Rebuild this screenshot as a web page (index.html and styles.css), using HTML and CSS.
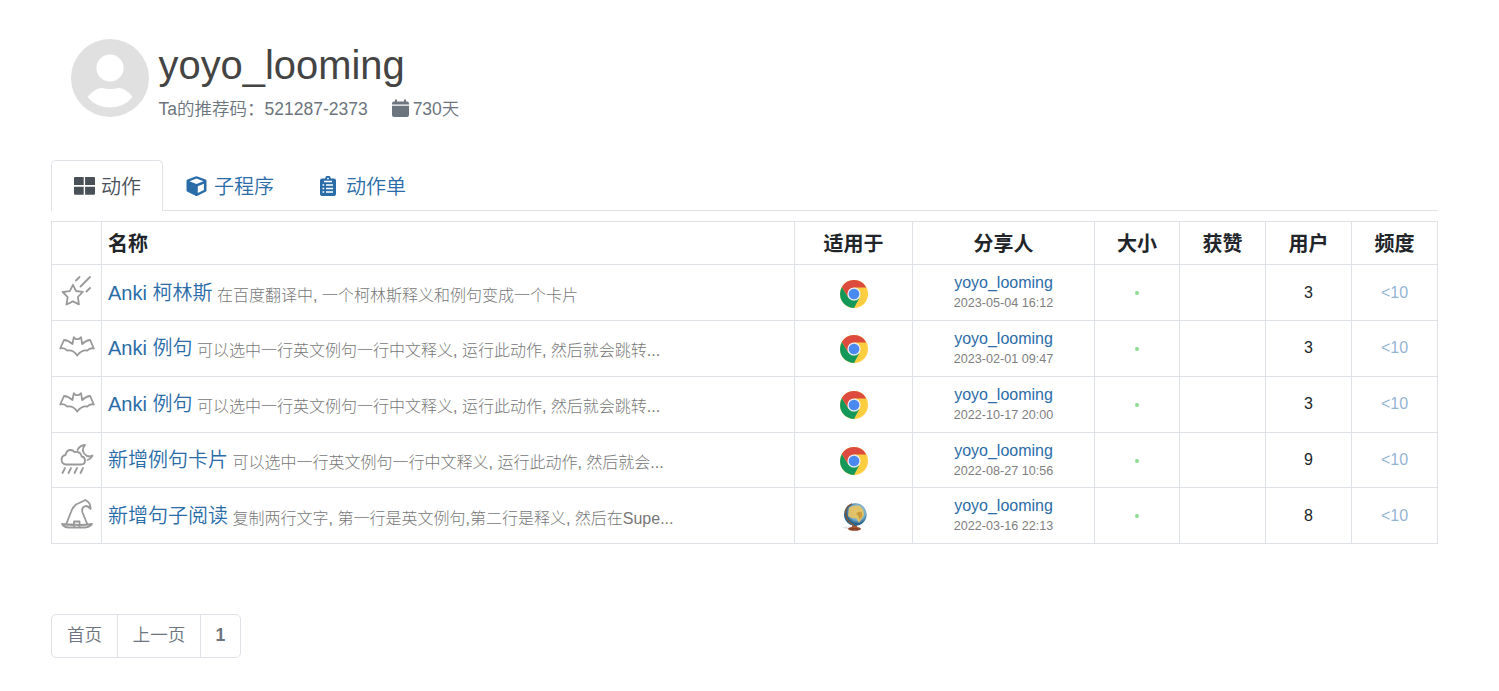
FILE: index.html
```html
<!DOCTYPE html>
<html lang="zh-CN">
<head>
<meta charset="utf-8">
<title>yoyo_looming</title>
<link rel="stylesheet" href="styles.css">
</head>
<body>
<svg class="defs" width="0" height="0">
  <symbol id="chrome" viewBox="0 0 28 28">
    <circle cx="14" cy="14" r="14" fill="#ffcd40"/>
    <path d="M1.900 7 8.200 17.200 14 20.600l5.400-2.600L14 28A14 14 0 0 1 1.900 7Z" fill="#13985a"/>
    <path d="M1.900 7A14 14 0 0 1 26.300 7.400H14L8 16.800Z" fill="#dc4b3e"/>
    <circle cx="14" cy="14" r="6.600" fill="#e9edf3"/>
    <circle cx="14" cy="14" r="5.300" fill="#4a89ef"/>
  </symbol>
  <symbol id="bat" viewBox="0 0 36 22">
    <path d="M1.200 12.500 5 4q4.200.2 8.500 4L14.800 1.200l2 2h3L22 1.200l1.200 6.800q4-3.800 8-4l3.600 8.500q-4-1-6.300 2-6-1-10.300 5-3.600-6-10.100-5-2.700-3.200-6.900-2Z"/>
  </symbol>
</svg>
<main class="page">
  <header class="profile">
    <svg class="avatar" viewBox="0 0 78 78"><circle cx="39" cy="39" r="39" fill="#e0e0e0"/><circle cx="39" cy="29" r="13.600" fill="#fff"/><path d="M16.500 58Q24 49 31 49q8 2 16 0 8 0 14.500 9Q53 68.500 39 68.500T16.500 58Z" fill="#fff"/></svg>
    <div>
      <h1 class="name">yoyo_looming</h1>
      <div class="meta"><span>Ta的推荐码：521287-2373</span><span class="days"><svg width="17" height="18" viewBox="0 0 17 18" fill="currentColor"><path d="M0 4.500Q0 2.500 2 2.500H3V.5h2v2h7v-2h2v2h1q2 0 2 2v1H0ZM0 6.700h17V16q0 2-2 2H2q-2 0-2-2Z"/></svg>730天</span></div>
    </div>
  </header>
  <nav class="tabs">
    <a class="tab active"><svg width="21" height="18" viewBox="0 0 21 18" fill="currentColor"><path d="M1 0h8.700v8H0V1Q0 0 1 0ZM11.100 0H20q1 0 1 1v7h-9.900ZM0 9.700h9.700v8H1q-1 0-1-1ZM11.100 9.700H21v7q0 1-1 1h-8.900Z"/></svg><span>动作</span></a>
    <a class="tab cube"><svg width="21" height="20" viewBox="0 0 21 20"><path fill="currentColor" d="M9.500.400q1-.5 2 0l8 3q1 .4 1 1.600v9.200q0 1-1 1.600l-8 3.900q-1 .4-2 0l-8-3.900q-1-.6-1-1.600V5q0-1.200 1-1.600Z"/><path fill="#fff" d="M3.500 5.200 10.500 2.600l7 2.600-7 2.900ZM11.800 10.300l6.100-2.600v6.200l-6.100 3Z"/></svg><span>子程序</span></a>
    <a class="tab list"><svg width="16" height="20" viewBox="0 0 16 20"><path fill="currentColor" d="M2 2.500h3.200a2.800 2.800 0 0 1 5.600 0H14q2 0 2 2V18q0 2-2 2H2q-2 0-2-2V4.500q0-2 2-2Z"/><circle cx="8" cy="2.600" r=".9" fill="#fff"/><path stroke="#fff" stroke-width="1.300" d="M4 5.500h8M2.500 9h1.700M6 9h7M2.500 12.500h1.700M6 12.500h7M2.500 16h1.700M6 16h7"/></svg><span>动作单</span></a>
  </nav>
  <table class="actions">
    <colgroup><col class="c-icon"><col class="c-name"><col class="c-app"><col class="c-user"><col class="c-size"><col class="c-stat"><col class="c-stat"><col class="c-stat"></colgroup>
    <thead><tr><th></th><th class="left">名称</th><th>适用于</th><th>分享人</th><th>大小</th><th>获赞</th><th>用户</th><th>频度</th></tr></thead>
    <tbody>
      <tr><td><svg class="glyph" viewBox="0 0 36 32"><path d="m14 8.800 3 6.200 6.800.9-4.900 5.100 1 7.400L14 25.400l-6.500 3.100 1.200-7.400-5-5.100 7.100-.9ZM17 4.500l3.500-3.500M21.500 10.500l9.500-9.500M27.500 15.500l3.500-3.500"/></svg></td><td class="left"><a class="title">Anki 柯林斯</a> <span class="desc">在百度翻译中, 一个柯林斯释义和例句变成一个卡片</span></td><td><svg class="app"><use href="#chrome"/></svg></td><td><a class="author">yoyo_looming</a><time>2023-05-04 16:12</time></td><td><i class="dot"></i></td><td></td><td class="num">3</td><td class="freq">&lt;10</td></tr>
      <tr class="raised"><td><svg class="glyph bat"><use href="#bat"/></svg></td><td class="left"><a class="title">Anki 例句</a> <span class="desc">可以选中一行英文例句一行中文释义, 运行此动作, 然后就会跳转...</span></td><td><svg class="app"><use href="#chrome"/></svg></td><td><a class="author">yoyo_looming</a><time>2023-02-01 09:47</time></td><td><i class="dot"></i></td><td></td><td class="num">3</td><td class="freq">&lt;10</td></tr>
      <tr class="raised"><td><svg class="glyph bat"><use href="#bat"/></svg></td><td class="left"><a class="title">Anki 例句</a> <span class="desc">可以选中一行英文例句一行中文释义, 运行此动作, 然后就会跳转...</span></td><td><svg class="app"><use href="#chrome"/></svg></td><td><a class="author">yoyo_looming</a><time>2022-10-17 20:00</time></td><td><i class="dot"></i></td><td></td><td class="num">3</td><td class="freq">&lt;10</td></tr>
      <tr class="short raised"><td><svg class="glyph" viewBox="0 0 36 32"><path d="M7 20.500a4.800 4.800 0 0 1-.5-9.500Q7.500 6 11.500 6q2.500 0 4 2 6-1 7.200 4.500 3.300.6 3.300 4 0 4-4 4ZM18.500 6Q20.500 1.500 26 1q-4 5-.5 9t8 1.500q-1.500 3.500-5 4.500M6 24l-2.500 5M12 24l-2.500 5M18 24l-2.500 5M24 24l-2.500 5"/></svg></td><td class="left"><a class="title">新增例句卡片</a> <span class="desc">可以选中一行英文例句一行中文释义, 运行此动作, 然后就会...</span></td><td><svg class="app"><use href="#chrome"/></svg></td><td><a class="author">yoyo_looming</a><time>2022-08-27 10:56</time></td><td><i class="dot"></i></td><td></td><td class="num">9</td><td class="freq">&lt;10</td></tr>
      <tr><td><svg class="glyph" viewBox="0 0 36 32"><path d="M7.500 24.500 12 13q1.500-4.500 5-7.500L26.500 1q5.500 3 5 9-2-3-5-3-4.500 1.500-3 6.500l4.500 11M3 25q5 1 12 1M20.500 26q7 0 12.500-1-2 3-7 3.500H10Q5 28.500 3 25ZM15 22.500h5.500v6H15Z"/></svg></td><td class="left"><a class="title">新增句子阅读</a> <span class="desc">复制两行文字, 第一行是英文例句,第二行是释义, 然后在Supe...</span></td><td><svg class="app" viewBox="0 0 28 28"><defs><radialGradient id="sea" cx=".6" cy=".4"><stop offset="0" stop-color="#d9cf8f"/><stop offset=".7" stop-color="#77aecb"/><stop offset="1" stop-color="#28648f"/></radialGradient></defs><path d="M2 24.500q8-2 16 0-8 3-16 0" fill="#e3e3e3"/><ellipse cx="14.500" cy="25.800" rx="6.500" ry="2" fill="#8d4426"/><path d="M12.500 21.500h4l1 3.500h-6Z" fill="#a65a31"/><circle cx="15.300" cy="11.500" r="11.300" fill="url(#sea)"/><path d="M9 4.500q7-3 11-1.500l3 4 1 5-5 8q-2-4-3-5-5 1-8-2Z" fill="#e8c362" opacity=".9"/><path d="M19 8.500l3 1v4l-2.500 3-1.500-4-2-2Z" fill="#c99d3f"/><path d="M12 .8Q4 4 6 12.500q1.500 7 8 9.500" fill="none" stroke="#80583c" stroke-width="1.300"/></svg></td><td><a class="author">yoyo_looming</a><time>2022-03-16 22:13</time></td><td><i class="dot"></i></td><td></td><td class="num">8</td><td class="freq">&lt;10</td></tr>
    </tbody>
  </table>
  <nav class="pager"><a class="first">首页</a><a class="prev">上一页</a><a class="current">1</a></nav>
</main>
</body>
</html>
```
FILE: styles.css
```css
* { box-sizing: border-box; }
body { margin: 0; background: #fff; color: #212529; font: 350 20px/30px "Liberation Sans", "Noto Sans CJK SC DemiLight", "Noto Sans CJK SC", sans-serif; }
.defs { position: absolute; }
.page { width: 1387px; margin-left: 51px; padding-top: 39px; }
.profile { display: flex; height: 121px; padding-left: 19.5px; gap: 10px; }
.avatar { width: 78px; height: 78px; }
.name { margin: 2px 0 0; font-size: 39.9px; line-height: 48px; font-weight: 400; color: #444; }
.meta { display: flex; gap: 24px; margin-top: 7px; font-size: 17.5px; line-height: 26px; color: #6c757d; }
.days { display: flex; align-items: center; gap: 4px; }
.days svg { margin-top: -2px; }
.tabs { display: flex; height: 51px; border-bottom: 1px solid #dee2e6; }
.tab { display: flex; align-items: center; height: 51px; color: #2a6ca8; }
.tab svg { flex: none; }
.tab span { padding-top: 2px; }
.active { width: 112px; padding-left: 22px; gap: 6px; color: #495057; background: #fff; border: 1px solid #dee2e6; border-bottom: 0; border-radius: 5px 5px 0 0; }
.cube { margin-left: 23px; gap: 7px; }
.list { margin-left: 46px; gap: 10px; }
.actions { width: 1387px; margin-top: 10px; table-layout: fixed; border-collapse: collapse; text-align: center; }
.actions th, .actions td { padding: 0; border: 1px solid #dee2e6; }
.actions th { height: 43px; padding-top: 2px; font-family: "Liberation Sans", "Noto Sans CJK SC", sans-serif; font-weight: 700; }
.actions td { height: 56px; vertical-align: top; }
.actions .short td { height: 55px; }
.actions .left { padding-left: 6px; text-align: left; white-space: nowrap; }
.actions td.left { padding-top: 13px; }
.actions .raised td.left { padding-top: 12px; }
.c-icon { width: 50px; }
.c-name { width: 693px; }
.c-app { width: 118px; }
.c-user { width: 182px; }
.c-size { width: 85px; }
.c-stat { width: 86px; }
.title { color: #2a6ca8; }
.desc { position: relative; top: 1px; margin-left: -1px; font-family: "Liberation Sans", "Noto Sans CJK SC", sans-serif; font-size: 16px; font-weight: 300; color: #777; }
.glyph { display: block; width: 36px; height: 32px; margin: 11px auto 0; fill: none; stroke: #999; stroke-width: 1.8; stroke-linejoin: round; stroke-linecap: round; }
.bat { height: 22px; margin-top: 15px; }
.app { display: block; width: 28px; height: 28px; margin: 15px auto 0; }
.raised .app { margin-top: 14px; }
.author { display: block; margin-top: 8px; font-size: 16px; line-height: 20px; color: #2a6ca8; }
.actions time { display: block; font-size: 12.6px; line-height: 21px; color: #808080; }
.dot { display: block; width: 4px; height: 4px; margin: 26px auto 0; border-radius: 50%; background: #8edb93; }
.actions .num, .actions .freq { padding-top: 13px; font-size: 16px; }
.actions .raised .num, .actions .raised .freq { padding-top: 12px; }
.freq { color: #94b5d3; }
.pager { display: flex; width: 190px; height: 44px; margin-top: 70px; border: 1px solid #dee2e6; border-radius: 5px; font-size: 17.6px; line-height: 41px; color: #6c757d; text-align: center; }
.first { width: 66px; border-right: 1px solid #dee2e6; }
.prev { width: 83px; border-right: 1px solid #dee2e6; }
.current { flex: 1; font-weight: 700; }
```
